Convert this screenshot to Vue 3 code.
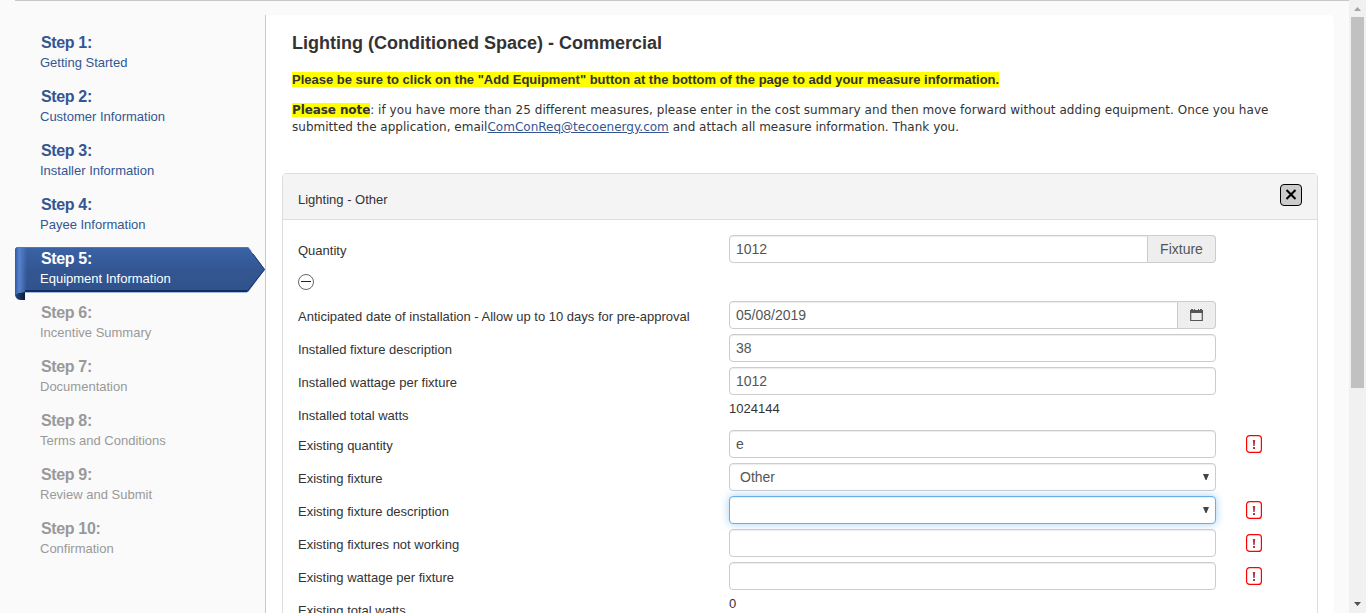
<script setup>
const steps = [
  'Getting Started',
  'Customer Information',
  'Installer Information',
  'Payee Information',
  'Equipment Information',
  'Incentive Summary',
  'Documentation',
  'Terms and Conditions',
  'Review and Submit',
  'Confirmation',
].map((label, i) => ({ n: i + 1, label, state: i < 4 ? 'done' : i === 4 ? 'active' : 'todo' }))

const rows = [
  { label: 'Quantity', kind: 'input', value: '1012', addon: 'Fixture' },
  { kind: 'toggle' },
  { label: 'Anticipated date of installation - Allow up to 10 days for pre-approval', kind: 'input', value: '05/08/2019', addon: 'calendar' },
  { label: 'Installed fixture description', kind: 'input', value: '38' },
  { label: 'Installed wattage per fixture', kind: 'input', value: '1012' },
  { label: 'Installed total watts', kind: 'static', value: '1024144' },
  { label: 'Existing quantity', kind: 'input', value: 'e', error: true },
  { label: 'Existing fixture', kind: 'select', value: 'Other' },
  { label: 'Existing fixture description', kind: 'select', value: '', focus: true, error: true },
  { label: 'Existing fixtures not working', kind: 'input', value: '', error: true },
  { label: 'Existing wattage per fixture', kind: 'input', value: '', error: true },
  { label: 'Existing total watts', kind: 'static', value: '0' },
]
</script>

<template>
  <div class="page">
    <div class="view">
      <nav class="steps">
        <div v-for="s in steps" :key="s.n" class="step" :class="s.state">
          <svg v-if="s.state === 'active'" class="ribbon" width="250" height="54" viewBox="0 0 250 54">
            <defs>
              <linearGradient id="face" x1="0" y1="0" x2="0" y2="1">
                <stop offset="0" stop-color="#3a62a6" />
                <stop offset="0.5" stop-color="#335692" />
                <stop offset="1" stop-color="#30518a" />
              </linearGradient>
              <linearGradient id="roll" x1="0" y1="0" x2="1" y2="0">
                <stop offset="0" stop-color="#3058a0" />
                <stop offset="0.35" stop-color="#5683cf" />
                <stop offset="1" stop-color="#5683cf" stop-opacity="0" />
              </linearGradient>
              <linearGradient id="fold" x1="0" y1="0" x2="1" y2="0">
                <stop offset="0" stop-color="#254a87" />
                <stop offset="1" stop-color="#0a1a38" />
              </linearGradient>
            </defs>
            <path d="M0 48Q2 45 10 45V53H6Q1 53 0 48Z" fill="url(#fold)" />
            <path d="M10 45.500H232" stroke="#9db9ea" />
            <path d="M2 0H233L250 22.500L233 45H9Q2 45 0 49V2Z" fill="url(#face)" />
            <path d="M2 0H12V45H9Q2 45 0 49V2Z" fill="url(#roll)" />
            <path d="M2 .5H233L236 4" fill="none" stroke="#4f78be" />
            <path d="M10 44H232" fill="none" stroke="#122c5c" stroke-width="2" />
            <path d="M232 44.500L249.500 22.500L238 7" fill="none" stroke="#1b3a72" stroke-width="1" />
          </svg>
          <div class="step-title">Step {{ s.n }}:</div>
          <div class="step-label">{{ s.label }}</div>
        </div>
      </nav>

      <main class="content">
        <h1>Lighting (Conditioned Space) - Commercial</h1>
        <p class="notice"><mark>Please be sure to click on the "Add Equipment" button at the bottom of the page to add your measure information.</mark></p>
        <div class="note">
          <div class="n1"><mark>Please note</mark>: if you have more than 25 different measures, please enter in the cost summary and then move forward without adding equipment. Once you have</div>
          <div class="n2">submitted the application, email<a>ComConReq@tecoenergy.com</a> and attach all measure information. Thank you.</div>
        </div>

        <section class="panel">
          <header class="panel-head">
            <span>Lighting - Other</span>
            <button class="close">
              <svg width="12" height="12" viewBox="0 0 12 12"><path d="M1.500 1L10.500 10M10.500 1L1.500 10" stroke="#000" stroke-width="2.100" /></svg>
            </button>
          </header>
          <div class="panel-body">
            <div v-for="(r, i) in rows" :key="i" class="row" :class="r.kind">
              <svg v-if="r.kind === 'toggle'" class="minus" width="18" height="18" viewBox="0 0 18 18">
                <circle cx="9" cy="9" r="7.500" fill="none" stroke="#555" stroke-width=".9" />
                <path d="M4 8.500H14" stroke="#222" />
              </svg>
              <template v-else>
                <label>{{ r.label }}</label>
                <div v-if="r.kind === 'static'" class="value">{{ r.value }}</div>
                <div v-else class="group">
                  <div class="control" :class="{ focus: r.focus, joined: r.addon }">
                    <span>{{ r.value }}</span>
                    <svg v-if="r.kind === 'select'" width="6" height="7" viewBox="0 0 6 7"><path d="M0 0H6L3.500 6H2.500Z" fill="#444" /></svg>
                  </div>
                  <div v-if="r.addon" class="addon" :class="{ cal: r.addon === 'calendar' }">
                    <svg v-if="r.addon === 'calendar'" width="13" height="13" viewBox="0 0 13 13">
                      <path d="M0 1H1V0H3V1H4V0H5V1H8V0H9V1H10V0H12V1H13V4H0Z" fill="#555" />
                      <path d="M.7 2V11.500H12.300V2" fill="none" stroke="#555" stroke-width="1.200" />
                    </svg>
                    <template v-else>{{ r.addon }}</template>
                  </div>
                </div>
                <svg v-if="r.error" class="error" width="16" height="18" viewBox="0 0 16 18">
                  <rect x=".6" y=".6" width="14.800" height="16.800" rx="3" fill="#fff" stroke="#f00" stroke-width="1.200" />
                  <path d="M6.800 5H9.200L8.700 11H7.300Z" fill="#b03a48" />
                  <path d="M7 12H9V14H7Z" fill="#b03a48" />
                </svg>
              </template>
            </div>
          </div>
        </section>
      </main>
    </div>
    <div class="scrollbar">
      <svg width="17" height="17" viewBox="0 0 17 17"><path d="M5 11L8.500 7L12 11Z" fill="#a3a3a3" /></svg>
      <div class="thumb"></div>
      <svg class="down" width="17" height="17" viewBox="0 0 17 17"><path d="M5 6L8.500 10L12 6Z" fill="#505050" /></svg>
    </div>
  </div>
</template>

<style>
body {
  overflow: hidden;
}
</style>

<style scoped>
* {
  box-sizing: border-box;
}
.page {
  display: flex;
  height: 613px;
  overflow: hidden;
  background: #fafafa;
  font-family: "Liberation Sans", Arial, sans-serif;
  font-size: 12px;
  color: #333;
}
.view {
  flex: 1;
  display: flex;
  padding: 14px 15px 0 0;
  margin-left: 15px;
  border-top: 1px solid #c8c8c8;
  overflow: hidden;
}
.steps {
  width: 250px;
  padding-top: 16px;
  flex: none;
}
.step {
  position: relative;
  height: 54px;
  padding: 1px 0 0 25px;
  color: #335693;
}
.step.todo {
  color: #999;
}
.step.active {
  color: #fff;
}
.ribbon {
  position: absolute;
  left: 0;
  top: 0;
}
.step-title,
.step-label {
  position: relative;
  white-space: nowrap;
}
.step-title {
  padding-left: 1px;
  font-size: 16px;
  font-weight: bold;
  letter-spacing: -0.35px;
  line-height: 22px;
}
.step-label {
  font-size: 13px;
  line-height: 18px;
}
.content {
  flex: 1;
  background: #fff;
  border-left: 1px solid #c8c8c8;
  border-top-right-radius: 5px;
  padding: 0 16px;
  height: 700px;
}
h1 {
  margin: 17px 0 0 10px;
  font-size: 18px;
  line-height: 22px;
}
.notice {
  margin: 17px 0 0 10px;
  font-size: 13px;
  font-weight: bold;
  line-height: 17px;
  white-space: nowrap;
}
mark {
  background: #ff0;
  color: inherit;
}
.note {
  margin: 14px 0 0 10px;
  font-family: "DejaVu Sans", Verdana, sans-serif;
  font-size: 12px;
  line-height: 17px;
  white-space: nowrap;
}
.note mark {
  font-weight: bold;
  letter-spacing: -0.1px;
}
.n1 {
  letter-spacing: 0.043px;
}
.n2 {
  letter-spacing: 0.01px;
}
.note a {
  color: #335693;
  text-decoration: underline;
}
.panel {
  margin-top: 37px;
  border: 1px solid #ddd;
  border-radius: 4px 4px 0 0;
  height: 500px;
}
.panel-head {
  display: flex;
  justify-content: space-between;
  height: 46px;
  padding: 10px 15px;
  background: #f4f4f4;
  border-bottom: 1px solid #ddd;
  font-size: 13px;
  line-height: 31px;
}
.close {
  display: flex;
  align-items: center;
  justify-content: center;
  width: 22px;
  height: 22px;
  padding: 0;
  border: 1px solid #000;
  border-radius: 4px;
  background: #ccc;
}
.panel-body {
  padding: 15px;
}
.row {
  display: grid;
  grid-template-columns: 431px 487px 1fr;
  height: 33px;
}
.row.static {
  height: 30px;
}
.minus {
  margin: 5px 0 0 -1px;
}
label {
  font-size: 13px;
  line-height: 20px;
  padding-top: 6px;
  white-space: nowrap;
}
.value {
  font-size: 13px;
  line-height: 18px;
}
.group {
  display: flex;
  height: 28px;
}
.control {
  flex: 1;
  display: flex;
  align-items: center;
  justify-content: space-between;
  border: 1px solid #ccc;
  border-radius: 4px;
  padding: 0 6px;
  font-size: 14px;
  color: #555;
  box-shadow: inset 0 1px 1px rgba(0, 0, 0, 0.075);
  background: #fff;
}
.select .control {
  padding-left: 10px;
}
.control.joined {
  border-radius: 4px 0 0 4px;
}
.control.focus {
  border-color: #66afe9;
  box-shadow: inset 0 1px 1px rgba(0, 0, 0, 0.075), 0 0 8px rgba(102, 175, 233, 0.6);
}
.addon {
  width: 68px;
  display: flex;
  align-items: center;
  justify-content: center;
  border: 1px solid #ccc;
  border-left: 0;
  border-radius: 0 4px 4px 0;
  background: #eee;
  color: #555;
  font-size: 14px;
}
.addon.cal {
  width: 38px;
}
.error {
  margin: 5px 0 0 30px;
}
.scrollbar {
  display: flex;
  flex-direction: column;
  width: 17px;
  background: #f1f1f1;
}
.scrollbar svg {
  flex: none;
}
.thumb {
  height: 371px;
  margin: 0 2px;
  background: #c1c1c1;
}
.down {
  margin-top: auto;
}
</style>
